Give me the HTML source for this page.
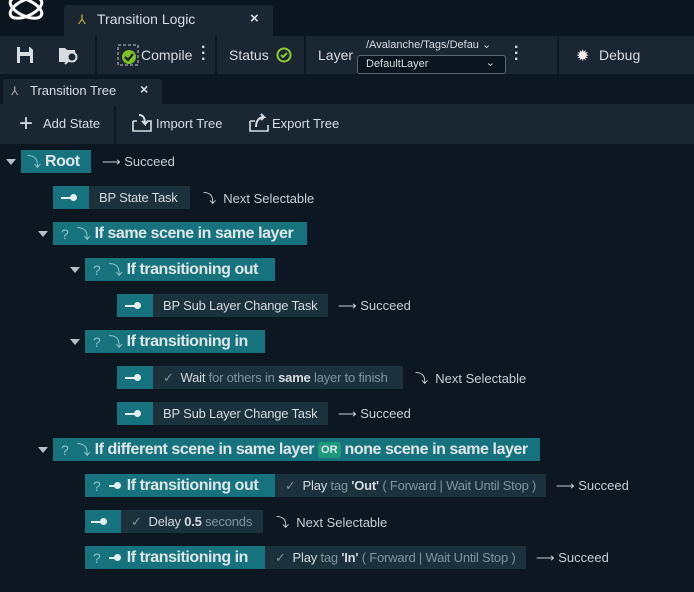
<!DOCTYPE html>
<html><head><meta charset="utf-8"><style>
*{margin:0;padding:0;box-sizing:border-box}
body{width:694px;height:592px;background:#0c1722;font-family:"Liberation Sans",sans-serif;color:#d8dde2;position:relative;overflow:hidden;font-size:13px}
.a{position:absolute}
.bar{background:#1b2633}
.sep{position:absolute;width:2px;background:#0e1821}
.t{background:#16737e;color:#dfe6ea;font-weight:bold;font-size:16px;letter-spacing:-0.45px;display:flex;align-items:center;height:23px;white-space:nowrap}
.d{background:#1b323d;color:#d5dbdf;font-size:13px;letter-spacing:-0.2px;display:flex;align-items:center;height:23px;white-space:nowrap}
.lbl{font-size:13px;color:#c8cfd5;white-space:nowrap;display:flex;align-items:center;height:23px}
.q{color:#8fc3ca;font-weight:normal;font-size:14px;letter-spacing:0}
.g{color:#7f959f}
.tri{width:0;height:0;border-left:5px solid transparent;border-right:5px solid transparent;border-top:6px solid #b8c0c6;position:absolute}
.pin{display:inline-block;width:14px;height:2px;background:#e6eef0;position:relative;vertical-align:middle}
.pin:after{content:"";position:absolute;right:-2px;top:-3px;width:7px;height:7px;border-radius:50%;background:#e6eef0}
</style></head><body>
<div class="a" style="left:0;top:0;width:694px;height:36px;background:#0b1520"></div>
<svg class="a" style="left:4px;top:0" width="44" height="26" viewBox="0 0 44 26"><g fill="none" stroke="#fff" stroke-width="3"><ellipse cx="22" cy="8" rx="17" ry="8" transform="rotate(25 22 8)"/><ellipse cx="22" cy="8" rx="17" ry="8" transform="rotate(-25 22 8)"/></g></svg>
<div class="a bar" style="left:64px;top:5px;width:209px;height:31px;border-radius:3px 3px 0 0"></div>
<div class="a" style="left:78px;top:12px;color:#c9a13a;font-size:13px">⅄</div>
<div class="a" style="left:97px;top:11px;font-size:14px">Transition Logic</div>
<div class="a" style="left:250px;top:10px;font-size:15px;font-weight:bold">×</div>
<div class="a bar" style="left:0;top:36px;width:694px;height:38px"></div>
<div class="sep" style="left:95px;top:36px;height:38px"></div>
<div class="sep" style="left:215px;top:36px;height:38px"></div>
<div class="sep" style="left:304px;top:36px;height:38px"></div>
<div class="sep" style="left:557px;top:36px;height:38px"></div>
<svg class="a" style="left:16px;top:46px" width="18" height="18"><path d="M1 1h13l3 3v13H1z" fill="#d8dde2"/><rect x="4" y="1" width="9" height="5" fill="#1b2633"/><rect x="4" y="10" width="10" height="7" fill="#1b2633"/></svg>
<svg class="a" style="left:58px;top:45px" width="22" height="20"><path d="M1 3h6l2 2h8v12H1z" fill="#d8dde2"/><circle cx="14" cy="12" r="4.5" fill="#1b2633" stroke="#d8dde2" stroke-width="2"/><path d="M11 15l-4 4" stroke="#d8dde2" stroke-width="2"/></svg>
<svg class="a" style="left:117px;top:44px" width="22" height="22"><rect x="1" y="1" width="20" height="20" fill="none" stroke="#ccc" stroke-dasharray="3 2"/><circle cx="12" cy="13" r="7" fill="#7bc02a"/><path d="M8 13l3 3 5-6" stroke="#111" stroke-width="2" fill="none"/></svg>
<div class="a" style="left:141px;top:47px;font-size:14px">Compile</div>
<div class="a" style="left:201px;top:45px;font-size:16px;font-weight:bold;line-height:6px">·<br>·<br>·</div>
<div class="a" style="left:229px;top:47px;font-size:14px">Status</div>
<svg class="a" style="left:276px;top:47px" width="16" height="16"><circle cx="8" cy="8" r="6.5" fill="none" stroke="#8ccf2a" stroke-width="2"/><path d="M5 8l2 2 4-4" stroke="#8ccf2a" stroke-width="2" fill="none"/></svg>
<div class="a" style="left:318px;top:47px;font-size:14px">Layer</div>
<div class="a" style="left:366px;top:38px;font-size:11px">/Avalanche/Tags/Defau ⌄</div>
<div class="a" style="left:357px;top:55px;width:149px;height:19px;background:#0b1520;border:1px solid #5d6670;border-radius:3px;font-size:11px;padding:2px 0 0 8px">DefaultLayer<span style="position:absolute;right:10px;top:0">⌄</span></div>
<div class="a" style="left:514px;top:45px;font-size:16px;font-weight:bold;line-height:6px">·<br>·<br>·</div>
<div class="a" style="left:576px;top:46px;font-size:16px;color:#eee">✹</div>
<div class="a" style="left:599px;top:47px;font-size:14px">Debug</div>
<div class="a bar" style="left:3px;top:79px;width:159px;height:25px;border-radius:3px 3px 0 0"></div>
<div class="a" style="left:11px;top:84px;color:#aaa;font-size:12px">⅄</div>
<div class="a" style="left:30px;top:83px;font-size:13px">Transition Tree</div>
<div class="a" style="left:140px;top:81px;font-size:14px;font-weight:bold">×</div>
<div class="a bar" style="left:0;top:104px;width:694px;height:40px"></div>
<div class="sep" style="left:114px;top:106px;height:38px"></div>
<div class="a" style="left:19px;top:112px;font-size:24px;line-height:24px">+</div>
<div class="a" style="left:43px;top:116px;font-size:13px">Add State</div>
<svg class="a" style="left:131px;top:113px" width="22" height="20"><path d="M2 8v10h18V8h-4M6 8H2" stroke="#d8dde2" stroke-width="1.6" fill="none"/><path d="M8 2c5 0 6 4 6 9l-3-3m3 3l3-3" stroke="#d8dde2" stroke-width="2" fill="none"/></svg>
<div class="a" style="left:156px;top:116px;font-size:13px">Import Tree</div>
<svg class="a" style="left:248px;top:113px" width="22" height="20"><path d="M2 8v10h18v-6M2 8h5" stroke="#d8dde2" stroke-width="1.6" fill="none"/><path d="M8 14c0-6 3-10 8-10l-3-3m3 3l-3 3" stroke="#d8dde2" stroke-width="2" fill="none"/></svg>
<div class="a" style="left:272px;top:116px;font-size:13px">Export Tree</div>

<div class="tri" style="left:6px;top:159px"></div>
<div class="a t" style="left:21px;top:150px;width:70px;padding-left:6px"><span class="q">⤵</span>&nbsp;Root</div>
<div class="a lbl" style="left:102px;top:150px">⟶ Succeed</div>

<div class="a t" style="left:53px;top:186px;width:36px;padding-left:8px"><span class="pin"></span></div>
<div class="a d" style="left:89px;top:186px;width:101px;padding-left:10px">BP State Task</div>
<div class="a lbl" style="left:203px;top:186px">⤵&nbsp; Next Selectable</div>

<div class="tri" style="left:38px;top:231px"></div>
<div class="a t" style="left:53px;top:222px;width:254px;padding-left:8px"><span class="q">?&nbsp; ⤵</span>&nbsp;If same scene in same layer</div>

<div class="tri" style="left:70px;top:267px"></div>
<div class="a t" style="left:85px;top:258px;width:190px;padding-left:8px"><span class="q">?&nbsp; ⤵</span>&nbsp;If transitioning out</div>

<div class="a t" style="left:117px;top:294px;width:36px;padding-left:8px"><span class="pin"></span></div>
<div class="a d" style="left:153px;top:294px;width:175px;padding-left:10px">BP Sub Layer Change Task</div>
<div class="a lbl" style="left:338px;top:294px">⟶ Succeed</div>

<div class="tri" style="left:70px;top:339px"></div>
<div class="a t" style="left:85px;top:330px;width:180px;padding-left:8px"><span class="q">?&nbsp; ⤵</span>&nbsp;If transitioning in</div>

<div class="a t" style="left:117px;top:366px;width:36px;padding-left:8px"><span class="pin"></span></div>
<div class="a d" style="left:153px;top:366px;width:250px;padding-left:10px"><span class="g">✓&nbsp;&nbsp;</span>Wait&nbsp;<span class="g">for others in&nbsp;</span><b>same</b>&nbsp;<span class="g">layer to finish</span></div>
<div class="a lbl" style="left:415px;top:366px">⤵&nbsp; Next Selectable</div>

<div class="a t" style="left:117px;top:402px;width:36px;padding-left:8px"><span class="pin"></span></div>
<div class="a d" style="left:153px;top:402px;width:175px;padding-left:10px">BP Sub Layer Change Task</div>
<div class="a lbl" style="left:338px;top:402px">⟶ Succeed</div>

<div class="tri" style="left:38px;top:447px"></div>
<div class="a t" style="left:53px;top:438px;width:487px;padding-left:8px"><span class="q">?&nbsp; ⤵</span>&nbsp;If different scene in same layer&nbsp;<span style="background:#1d9a7a;font-size:11px;padding:2px 3px;border-radius:3px;letter-spacing:0">OR</span>&nbsp;none scene in same layer</div>

<div class="a t" style="left:85px;top:474px;width:190px;padding-left:8px"><span class="q">?</span>&nbsp;&nbsp;<span class="pin" style="width:10px"></span>&nbsp;&nbsp;If transitioning out</div>
<div class="a d" style="left:275px;top:474px;width:271px;padding-left:10px"><span class="g">✓&nbsp;&nbsp;</span>Play&nbsp;<span class="g">tag&nbsp;</span><b>'Out'</b>&nbsp;<span class="g">( Forward | Wait Until Stop )</span></div>
<div class="a lbl" style="left:556px;top:474px">⟶ Succeed</div>

<div class="a t" style="left:85px;top:510px;width:36px;padding-left:6px"><span class="pin"></span></div>
<div class="a d" style="left:121px;top:510px;width:142px;padding-left:10px"><span class="g">✓&nbsp;&nbsp;</span>Delay&nbsp;<b>0.5</b>&nbsp;<span class="g">seconds</span></div>
<div class="a lbl" style="left:276px;top:510px">⤵&nbsp; Next Selectable</div>

<div class="a t" style="left:85px;top:546px;width:180px;padding-left:8px"><span class="q">?</span>&nbsp;&nbsp;<span class="pin" style="width:10px"></span>&nbsp;&nbsp;If transitioning in</div>
<div class="a d" style="left:265px;top:546px;width:261px;padding-left:10px"><span class="g">✓&nbsp;&nbsp;</span>Play&nbsp;<span class="g">tag&nbsp;</span><b>'In'</b>&nbsp;<span class="g">( Forward | Wait Until Stop )</span></div>
<div class="a lbl" style="left:536px;top:546px">⟶ Succeed</div>
</body></html>
